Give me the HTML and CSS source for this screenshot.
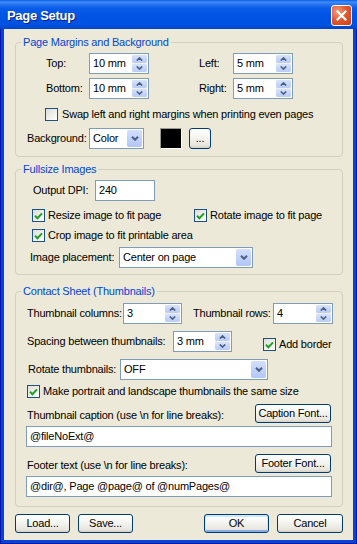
FILE: index.html
```html
<!DOCTYPE html>
<html lang="en">
<head>
	<meta charset="UTF-8">
	<meta name="viewport" content="width=device-width, initial-scale=1.0">
	<link rel="stylesheet" href="styles.css">
	<title>Page Setup</title>
</head>
<body>
	<div class="win" role="dialog" aria-label="Page Setup">
		<div class="titlebar">
			<span class="title">Page Setup</span>
			<button class="close" aria-label="Close">
				<svg width="11" height="11" viewBox="0 0 11 11"><path d="M1.5 1.5L9.5 9.5M9.5 1.5L1.5 9.5" stroke="#fff" stroke-width="2.2" stroke-linecap="square"/></svg>
			</button>
		</div>

		<div class="client">

			<fieldset class="group g-margins">
				<legend>Page Margins and Background</legend>
				<div class="row m-row first">
					<label class="lbl w-top">Top:</label>
					<div class="spin"><span class="val">10 mm</span><span class="spin-btns"><i class="up"><svg width="7" height="4" viewBox="0 0 7 4"><path d="M0.8 3.6L3.5 0.9L6.2 3.6" fill="none" stroke="#4D6185" stroke-width="1.6"/></svg></i><i class="dn"><svg width="7" height="4" viewBox="0 0 7 4"><path d="M0.8 0.4L3.5 3.1L6.2 0.4" fill="none" stroke="#4D6185" stroke-width="1.6"/></svg></i></span></div>
					<label class="lbl w-left">Left:</label>
					<div class="spin"><span class="val">5 mm</span><span class="spin-btns"><i class="up"><svg width="7" height="4" viewBox="0 0 7 4"><path d="M0.8 3.6L3.5 0.9L6.2 3.6" fill="none" stroke="#4D6185" stroke-width="1.6"/></svg></i><i class="dn"><svg width="7" height="4" viewBox="0 0 7 4"><path d="M0.8 0.4L3.5 3.1L6.2 0.4" fill="none" stroke="#4D6185" stroke-width="1.6"/></svg></i></span></div>
				</div>
				<div class="row m-row">
					<label class="lbl w-top">Bottom:</label>
					<div class="spin"><span class="val">10 mm</span><span class="spin-btns"><i class="up"><svg width="7" height="4" viewBox="0 0 7 4"><path d="M0.8 3.6L3.5 0.9L6.2 3.6" fill="none" stroke="#4D6185" stroke-width="1.6"/></svg></i><i class="dn"><svg width="7" height="4" viewBox="0 0 7 4"><path d="M0.8 0.4L3.5 3.1L6.2 0.4" fill="none" stroke="#4D6185" stroke-width="1.6"/></svg></i></span></div>
					<label class="lbl w-left">Right:</label>
					<div class="spin"><span class="val">5 mm</span><span class="spin-btns"><i class="up"><svg width="7" height="4" viewBox="0 0 7 4"><path d="M0.8 3.6L3.5 0.9L6.2 3.6" fill="none" stroke="#4D6185" stroke-width="1.6"/></svg></i><i class="dn"><svg width="7" height="4" viewBox="0 0 7 4"><path d="M0.8 0.4L3.5 3.1L6.2 0.4" fill="none" stroke="#4D6185" stroke-width="1.6"/></svg></i></span></div>
				</div>
				<div class="row chk-row swap-row">
					<span class="chk"></span>
					<span class="chk-text">Swap left and right margins when printing even pages</span>
				</div>
				<div class="row bg-row">
					<label class="lbl w-bg">Background:</label>
					<div class="combo w-color"><span class="val">Color</span><span class="drop"><svg width="8" height="5" viewBox="0 0 8 5"><path d="M1 0.8L4 3.8L7 0.8" fill="none" stroke="#4D6185" stroke-width="2"/></svg></span></div>
					<span class="swatch"></span>
					<button class="btn btn-dots">...</button>
				</div>
			</fieldset>

			<fieldset class="group g-full">
				<legend>Fullsize Images</legend>
				<div class="row dpi-row">
					<label class="lbl w-dpi">Output DPI:</label>
					<div class="field w-dpi-field">240</div>
				</div>
				<div class="row chk-row full-chk first-chk">
					<span class="chk-item w-resize"><span class="chk on"><svg width="9" height="8" viewBox="0 0 9 8"><path d="M1 3.8L3.4 6.2L8 1.4" fill="none" stroke="#21A121" stroke-width="2"/></svg></span><span class="chk-text">Resize image to fit page</span></span>
					<span class="chk-item"><span class="chk on"><svg width="9" height="8" viewBox="0 0 9 8"><path d="M1 3.8L3.4 6.2L8 1.4" fill="none" stroke="#21A121" stroke-width="2"/></svg></span><span class="chk-text">Rotate image to fit page</span></span>
				</div>
				<div class="row chk-row full-chk">
					<span class="chk-item"><span class="chk on"><svg width="9" height="8" viewBox="0 0 9 8"><path d="M1 3.8L3.4 6.2L8 1.4" fill="none" stroke="#21A121" stroke-width="2"/></svg></span><span class="chk-text">Crop image to fit printable area</span></span>
				</div>
				<div class="row place-row">
					<label class="lbl w-place">Image placement:</label>
					<div class="combo w-place-box"><span class="val">Center on page</span><span class="drop"><svg width="8" height="5" viewBox="0 0 8 5"><path d="M1 0.8L4 3.8L7 0.8" fill="none" stroke="#4D6185" stroke-width="2"/></svg></span></div>
				</div>
			</fieldset>

			<fieldset class="group g-sheet">
				<legend>Contact Sheet (Thumbnails)</legend>
				<div class="row s-row cols-row">
					<label class="lbl w-cols">Thumbnail columns:</label>
					<div class="spin w59"><span class="val">3</span><span class="spin-btns"><i class="up"><svg width="7" height="4" viewBox="0 0 7 4"><path d="M0.8 3.6L3.5 0.9L6.2 3.6" fill="none" stroke="#4D6185" stroke-width="1.6"/></svg></i><i class="dn"><svg width="7" height="4" viewBox="0 0 7 4"><path d="M0.8 0.4L3.5 3.1L6.2 0.4" fill="none" stroke="#4D6185" stroke-width="1.6"/></svg></i></span></div>
					<label class="lbl w-rows">Thumbnail rows:</label>
					<div class="spin"><span class="val">4</span><span class="spin-btns"><i class="up"><svg width="7" height="4" viewBox="0 0 7 4"><path d="M0.8 3.6L3.5 0.9L6.2 3.6" fill="none" stroke="#4D6185" stroke-width="1.6"/></svg></i><i class="dn"><svg width="7" height="4" viewBox="0 0 7 4"><path d="M0.8 0.4L3.5 3.1L6.2 0.4" fill="none" stroke="#4D6185" stroke-width="1.6"/></svg></i></span></div>
				</div>
				<div class="row s-row gap-row">
					<label class="lbl w-gap">Spacing between thumbnails:</label>
					<div class="spin w59"><span class="val">3 mm</span><span class="spin-btns"><i class="up"><svg width="7" height="4" viewBox="0 0 7 4"><path d="M0.8 3.6L3.5 0.9L6.2 3.6" fill="none" stroke="#4D6185" stroke-width="1.6"/></svg></i><i class="dn"><svg width="7" height="4" viewBox="0 0 7 4"><path d="M0.8 0.4L3.5 3.1L6.2 0.4" fill="none" stroke="#4D6185" stroke-width="1.6"/></svg></i></span></div>
					<span class="chk-item border-chk"><span class="chk on"><svg width="9" height="8" viewBox="0 0 9 8"><path d="M1 3.8L3.4 6.2L8 1.4" fill="none" stroke="#21A121" stroke-width="2"/></svg></span><span class="chk-text">Add border</span></span>
				</div>
				<div class="row s-row rot-row">
					<label class="lbl w-rot">Rotate thumbnails:</label>
					<div class="combo w-rot-box"><span class="val">OFF</span><span class="drop"><svg width="8" height="5" viewBox="0 0 8 5"><path d="M1 0.8L4 3.8L7 0.8" fill="none" stroke="#4D6185" stroke-width="2"/></svg></span></div>
				</div>
				<div class="row chk-row same-row">
					<span class="chk-item"><span class="chk on"><svg width="9" height="8" viewBox="0 0 9 8"><path d="M1 3.8L3.4 6.2L8 1.4" fill="none" stroke="#21A121" stroke-width="2"/></svg></span><span class="chk-text">Make portrait and landscape thumbnails the same size</span></span>
				</div>
				<div class="row text-head">
					<label class="lbl">Thumbnail caption (use \n for line breaks):</label>
					<button class="btn btn-font">Caption Font...</button>
				</div>
				<div class="field wide">@fileNoExt@</div>
				<div class="row text-head footer-head">
					<label class="lbl">Footer text (use \n for line breaks):</label>
					<button class="btn btn-font">Footer Font...</button>
				</div>
				<div class="field wide">@dir@, Page @page@ of @numPages@</div>
			</fieldset>

			<div class="actions">
				<button class="btn btn-small">Load...</button>
				<button class="btn btn-small">Save...</button>
				<button class="btn btn-ok">OK</button>
				<button class="btn btn-cancel">Cancel</button>
			</div>
		</div>
	</div>
</body>
</html>
```

FILE: styles.css
```css
* {
  box-sizing: border-box;
}
html, body {
  margin: 0;
  padding: 0;
}
body {
  background: #fff;
  color: #000;
  font: 11px/13px "Liberation Sans", Arial, sans-serif;
  letter-spacing: -0.2px;
}

/* window frame */
.win {
  display: flex;
  flex-direction: column;
  width: 357px;
  height: 544px;
  background: #0842D8;
  border-left: 1px solid #0019A8;
  border-right: 1px solid #001A9E;
  border-bottom: 1px solid #001A9E;
}
.titlebar {
  display: flex;
  align-items: flex-start;
  height: 29px;
  margin: 0 -1px;
  padding: 0 5px 0 7px;
  background: linear-gradient(#0A5DEB 0, #3F8DF8 2px, #2B77F2 4px, #0A5DE8 8px, #0055E5 50%, #0052E0 85%, #0044CC 100%);
}
.title {
  flex: 1;
  margin-top: 8px;
  color: #fff;
  font: bold 13px/15px "Liberation Sans", Arial, sans-serif;
  letter-spacing: -0.3px;
  text-shadow: 1px 1px #0A1C8C;
}
.close {
  display: flex;
  align-items: center;
  justify-content: center;
  width: 21px;
  height: 21px;
  margin-top: 5px;
  padding: 0;
  border: 1px solid #fff;
  border-radius: 3px;
  background: radial-gradient(circle at 30% 30%, #F3A07E 0, #E5582F 45%, #C93F1A 100%);
}
.client {
  flex: 1;
  margin: 0 3px 3px;
  padding: 7px 10px 0 11px;
  background: #ECE9D8;
}

/* group boxes */
.group {
  margin: 0;
  padding: 0;
  min-width: 0;
  border: 1px solid #D0D0BF;
  border-radius: 4px;
}
.group legend {
  margin-left: 5px;
  padding: 0 2px;
  color: #0046D5;
  line-height: 13px;
}
.g-margins { padding-bottom: 7px; }
.g-full { margin-top: 6px; padding-bottom: 6px; }
.g-sheet { margin-top: 10px; padding-bottom: 9px; }

.row {
  display: flex;
  align-items: center;
}
.lbl {
  flex: none;
  white-space: nowrap;
}

/* controls */
.spin, .combo, .field {
  display: flex;
  align-items: stretch;
  height: 21px;
  border: 1px solid #7F9DB9;
  background: #fff;
}
.spin, .combo {
  padding: 1px;
}
.spin {
  width: 60px;
}
.spin.w59 {
  width: 59px;
}
.val {
  flex: 1;
  padding-left: 2px;
  line-height: 17px;
  white-space: nowrap;
}
.spin-btns {
  display: flex;
  flex-direction: column;
  gap: 1px;
  width: 15px;
  background: #F2F0E4;
}
.spin-btns i {
  display: flex;
  flex: 1;
  align-items: center;
  justify-content: center;
  border-radius: 2px;
  background: linear-gradient(#D6E2FD, #B9CCF7);
}
.drop {
  display: flex;
  align-items: center;
  justify-content: center;
  width: 15px;
  border-radius: 2px;
  background: linear-gradient(#D3DFFD, #B1C6F7);
}
.field {
  align-items: center;
  padding-left: 3px;
  white-space: nowrap;
}

.chk {
  display: flex;
  flex: none;
  align-items: center;
  justify-content: center;
  width: 13px;
  height: 13px;
  border: 1px solid #1C5180;
  background: linear-gradient(135deg, #DCDCD7, #fff);
}
.chk-item {
  display: flex;
  align-items: center;
}
.chk-text {
  margin-left: 3px;
  white-space: nowrap;
}
.chk-row {
  height: 13px;
}

.btn {
  display: flex;
  align-items: center;
  justify-content: center;
  height: 19px;
  padding: 0;
  border: 1px solid #003C74;
  border-radius: 3px;
  background: linear-gradient(#FFFFFF, #F4F4F0 45%, #E8E6DE 85%, #D6D0C5);
  color: #000;
  font: inherit;
  letter-spacing: inherit;
}

/* page margins group */
.m-row {
  margin: 4px 0 0 30px;
}
.w-top { width: 43px; }
.w-left { width: 34px; margin-left: 50px; }
.swap-row {
  margin: 9px 0 0 29px;
}
.swap-row .chk-text {
  margin-left: 4px;
}
.bg-row {
  margin: 7px 0 0 11px;
}
.w-bg { width: 62px; }
.w-color { width: 55px; }
.swatch {
  width: 22px;
  height: 21px;
  margin-left: 16px;
  background: #000;
  border: 1px solid;
  border-color: #9C9A8E #fff #fff #9C9A8E;
}
.btn-dots {
  width: 22px;
  height: 21px;
  margin-left: 7px;
}

/* fullsize group */
.dpi-row {
  margin: 4px 0 0 17px;
}
.w-dpi { width: 62px; }
.w-dpi-field { width: 60px; }
.full-chk {
  margin: 7px 0 0 16px;
}
.full-chk.first-chk {
  margin-top: 8px;
}
.w-resize { width: 162px; }
.place-row {
  margin: 5px 0 0 14px;
}
.w-place { width: 89px; }
.w-place-box { width: 134px; }

/* contact sheet group */
.s-row {
  margin: 7px 0 0 11px;
}
.cols-row {
  margin-top: 5px;
}
.w-cols { width: 96px; }
.w-rows { width: 80px; margin-left: 11px; }
.w-gap { width: 146px; }
.border-chk {
  margin: 6px 0 0 31px;
}
.rot-row {
  margin-left: 12px;
}
.w-rot { width: 92px; }
.w-rot-box { width: 148px; }
.same-row {
  margin: 5px 0 0 11px;
}
.text-head {
  justify-content: space-between;
  margin: 6px 11px 0 11px;
}
.text-head .lbl {
  padding-top: 4px;
}
.footer-head {
  margin-top: 7px;
}
.btn-font {
  width: 76px;
}
.field.wide {
  margin: 3px 10px 0;
}

/* dialog buttons */
.actions {
  display: flex;
  gap: 8px;
  margin-top: 7px;
}
.btn-small { width: 55px; }
.btn-ok {
  width: 65px;
  margin-left: auto;
  box-shadow: inset 0 1px 0 1px #CEE7FF, inset 0 -1px 0 1px #89ADE4;
}
.btn-cancel { width: 66px; }
```
